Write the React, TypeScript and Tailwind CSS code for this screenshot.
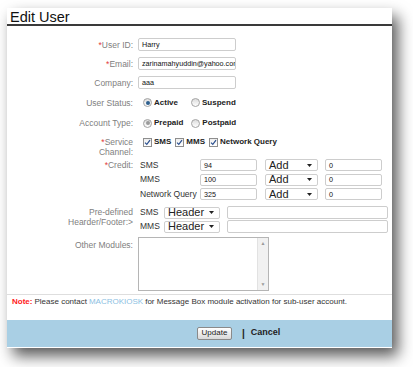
import React from 'react';

const Req = () => <span className="text-[#e23b3b]">*</span>;

const Radio: React.FC<{ checked?: boolean; disabled?: boolean }> = ({ checked, disabled }) => (
  <span className="flex items-center justify-center w-[9px] h-[9px] rounded-full border border-[#a3a3a3] bg-gradient-to-b from-[#dcdcdc] to-white">
    {checked && (
      <span className={disabled ? 'w-[4px] h-[4px] rounded-full bg-[#9b9b9b]' : 'w-[4px] h-[4px] rounded-full bg-[#2d5f8e]'} />
    )}
  </span>
);

const Check = () => (
  <span className="flex items-center justify-center w-[9px] h-[9px] border border-[#8e8e8e] bg-gradient-to-b from-[#eeeeee] to-white">
    <svg width="7" height="7" viewBox="0 0 7 7">
      <path d="M1 3.6 L2.8 5.4 L6 1.2" fill="none" stroke="#2a4f8f" strokeWidth="1.2" />
    </svg>
  </span>
);

const Caret = () => (
  <svg width="5" height="3" viewBox="0 0 5 3">
    <path d="M0 0 H5 L2.5 3 Z" fill="#222" />
  </svg>
);

const Select: React.FC<{ label: string; w: string }> = ({ label, w }) => (
  <div className={`${w} h-[12px] flex items-center justify-between border border-[#cfcfcf] rounded-[2px] bg-white pl-[3px] pr-[5px] text-[11px] text-[#222] leading-none`}>
    <span>{label}</span>
    <Caret />
  </div>
);

const Box: React.FC<{ w: string; value?: string; h?: string }> = ({ w, value, h = 'h-[12px]' }) => (
  <div className={`${w} ${h} flex items-center border border-[#cdcdcd] rounded-[2px] bg-white px-[3px] text-[7.2px] text-[#111] overflow-hidden whitespace-nowrap leading-none`}>
    {value}
  </div>
);

const Label: React.FC<{ children: React.ReactNode }> = ({ children }) => (
  <div className="w-[126px] shrink-0 text-right text-[8.5px] text-[#808080] leading-[10px]">{children}</div>
);

export default function App() {
  return (
    <div className="w-[413px] h-[367px] bg-white pt-[8px] pl-[7px] font-['Liberation_Sans',Arial,sans-serif]">
      <div className="w-[385px] h-[340px] bg-white flex flex-col shadow-[6px_8px_14px_rgba(0,0,0,0.65)]">
        {/* title */}
        <div className="h-[18px] border-b-2 border-[#3a3a3a] pl-[3px] text-[14.5px] leading-[18px] text-[#111]">Edit User</div>

        <div className="flex flex-col pt-[9px]">
          <div className="flex items-center h-[19px]">
            <Label><Req />User ID:</Label>
            <div className="ml-[5px]"><Box w="w-[98px]" h="h-[13px]" value="Harry" /></div>
          </div>
          <div className="flex items-center h-[19px]">
            <Label><Req />Email:</Label>
            <div className="ml-[5px]"><Box w="w-[98px]" h="h-[13px]" value="zarinamahyuddin@yahoo.com" /></div>
          </div>
          <div className="flex items-center h-[19px]">
            <Label>Company:</Label>
            <div className="ml-[5px]"><Box w="w-[98px]" h="h-[13px]" value="aaa" /></div>
          </div>

          <div className="flex items-center h-[21px]">
            <Label>User Status:</Label>
            <div className="ml-[10px] flex items-center text-[8px] font-bold text-[#222]">
              <Radio checked />
              <span className="ml-[2px]">Active</span>
              <span className="ml-[13px]"><Radio /></span>
              <span className="ml-[2px]">Suspend</span>
            </div>
          </div>
          <div className="flex items-center h-[20px]">
            <Label>Account Type:</Label>
            <div className="ml-[10px] flex items-center text-[8px] font-bold text-[#222]">
              <Radio checked disabled />
              <span className="ml-[2px]">Prepaid</span>
              <span className="ml-[8px]"><Radio /></span>
              <span className="ml-[2px]">Postpaid</span>
            </div>
          </div>

          <div className="flex items-start h-[25px] pt-[4px]">
            <Label><Req />Service<br />Channel:</Label>
            <div className="ml-[10px] h-[10px] flex items-center text-[8px] font-bold text-[#222]">
              <Check />
              <span className="ml-[2px]">SMS</span>
              <span className="ml-[4px]"><Check /></span>
              <span className="ml-[2px]">MMS</span>
              <span className="ml-[4px]"><Check /></span>
              <span className="ml-[2px]">Network Query</span>
            </div>
          </div>

          {/* credit */}
          <div className="flex items-start">
            <div className="h-[14.5px] flex items-center"><Label><Req />Credit:</Label></div>
            <div className="ml-[7px] flex flex-col text-[8.5px] text-[#333]">
              {[
                ['SMS', '94'],
                ['MMS', '100'],
                ['Network Query', '325'],
              ].map(([name, val]) => (
                <div key={name} className="h-[14.5px] flex items-center">
                  <span className="w-[60px] whitespace-nowrap">{name}</span>
                  <Box w="w-[57px]" value={val} />
                  <div className="ml-[8px]"><Select label="Add" w="w-[53px]" /></div>
                  <div className="ml-[7px]"><Box w="w-[57px]" value="0" /></div>
                </div>
              ))}
            </div>
          </div>

          {/* pre-defined */}
          <div className="flex items-start mt-[4px]">
            <div className="pt-[1px]"><Label>Pre-defined<br />Hearder/Footer:&gt;</Label></div>
            <div className="ml-[7px] flex flex-col text-[8.5px] text-[#333]">
              {['SMS', 'MMS'].map((name) => (
                <div key={name} className="h-[14px] flex items-center">
                  <span className="w-[24px]">{name}</span>
                  <Select label="Header" w="w-[56px]" />
                  <div className="ml-[7px]"><Box w="w-[161px]" h="h-[13px]" /></div>
                </div>
              ))}
            </div>
          </div>

          {/* other modules */}
          <div className="flex items-start mt-[3px]">
            <div className="pt-[3px]"><Label>Other Modules:</Label></div>
            <div className="ml-[5px] w-[131px] h-[54px] border border-[#b5b5b5] bg-white flex justify-end">
              <div className="w-[11px] h-full bg-[#f1f1f1] border-l border-[#e2e2e2] flex flex-col justify-between items-center py-[3px] text-[5px] text-[#9a9a9a] leading-none">
                <span>▲</span>
                <span>▼</span>
              </div>
            </div>
          </div>
        </div>

        {/* note */}
        <div className="mt-[3px] border-t border-[#dedede] h-[15px] flex items-center pl-[5px] text-[8px] text-[#333] whitespace-nowrap">
          <span className="text-[#ff2020] font-bold">Note:</span>
          <span className="ml-[2px]">Please contact</span>
          <span className="ml-[2px] text-[#8cc0e2]">MACROKIOSK</span>
          <span className="ml-[2px]">for Message Box module activation for sub-user account.</span>
        </div>

        {/* footer */}
        <div className="mt-[11px] h-[27px] bg-[#a9cfe4] flex items-center pl-[190px]">
          <button className="h-[13px] w-[35px] rounded-[2px] border border-[#8a8a8a] bg-gradient-to-b from-white to-[#d9d9d9] text-[8px] text-[#222] leading-none">
            Update
          </button>
          <span className="ml-[10px] text-[10px] font-bold text-[#222]">|</span>
          <span className="ml-[6px] text-[9px] font-bold text-[#222]">Cancel</span>
        </div>
      </div>
    </div>
  );
}
